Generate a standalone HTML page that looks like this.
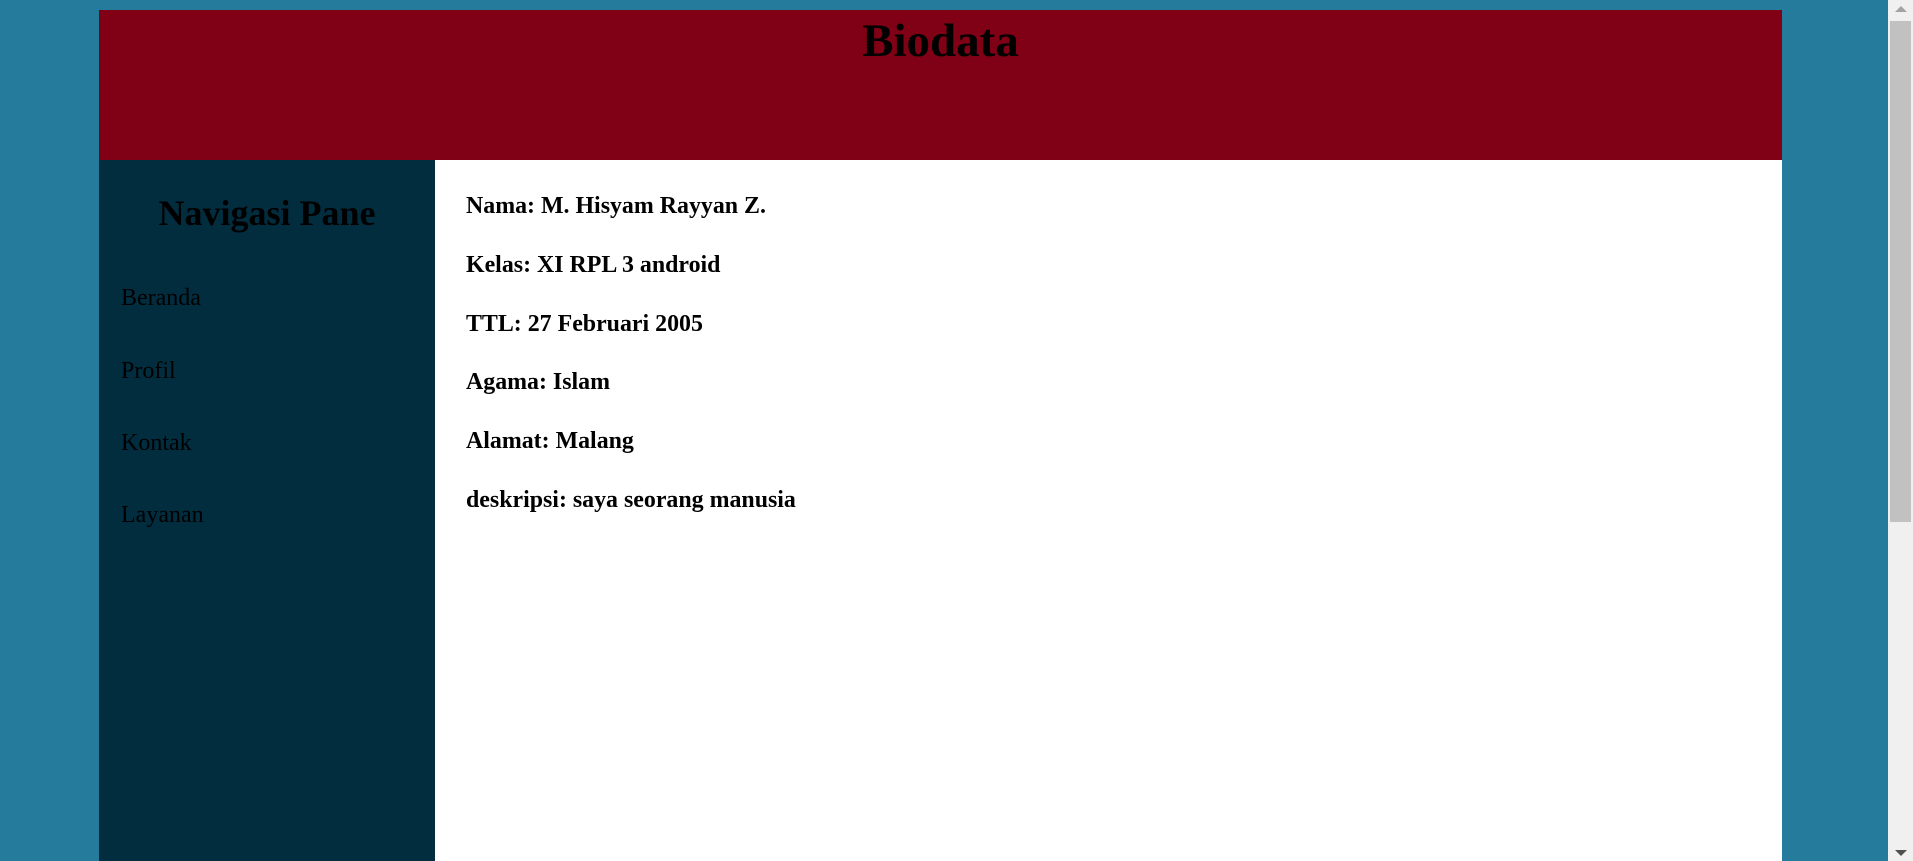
<!DOCTYPE html>
<html><head><meta charset="utf-8"><style>
html,body{margin:0;padding:0;}
body{width:1913px;height:861px;background:#257b9c;position:relative;overflow:hidden;font-family:"Liberation Serif",serif;color:#000;}
.a{position:absolute;line-height:1;white-space:nowrap;}
#hdr{position:absolute;left:99px;top:10px;width:1683px;height:150px;background:#800016;}
#side{position:absolute;left:99px;top:160px;width:336px;height:701px;background:#022d3f;}
#main{position:absolute;left:435px;top:160px;width:1347px;height:701px;background:#fff;}
#sb{position:absolute;left:1888px;top:0;width:25px;height:861px;background:#f0f0f0;}
#thumb{position:absolute;left:2px;top:21px;width:21px;height:501px;background:#c1c1c1;}
.c{font-size:23.9px;font-weight:bold;left:466px;}
.n{font-size:24px;left:121px;}
</style></head><body>
<div id="hdr"></div><div id="side"></div><div id="main"></div>
<div class="a" style="left:99px;width:1683px;text-align:center;font-size:47px;font-weight:bold;top:18px;">Biodata</div>
<div class="a" style="left:99px;width:336px;text-align:center;font-size:36px;font-weight:bold;top:195px;">Navigasi Pane</div>
<div class="a n" style="top:286px;">Beranda</div>
<div class="a n" style="top:359px;">Profil</div>
<div class="a n" style="top:431px;">Kontak</div>
<div class="a n" style="top:503px;">Layanan</div>
<div class="a c" style="top:195px;">Nama: M. Hisyam Rayyan Z.</div>
<div class="a c" style="top:254px;">Kelas: XI RPL 3 android</div>
<div class="a c" style="top:313px;">TTL: 27 Februari 2005</div>
<div class="a c" style="top:371px;">Agama: Islam</div>
<div class="a c" style="top:430px;">Alamat: Malang</div>
<div class="a c" style="top:489px;">deskripsi: saya seorang manusia</div>
<div id="sb"><div id="thumb"></div>
<svg style="position:absolute;left:7px;top:6px" width="12" height="6"><path d="M0 6 L6 0 L12 6Z" fill="#a3a3a3"/></svg>
<svg style="position:absolute;left:7px;top:850px" width="12" height="6"><path d="M0 0 L12 0 L6 6Z" fill="#505050"/></svg>
</div>
</body></html>
